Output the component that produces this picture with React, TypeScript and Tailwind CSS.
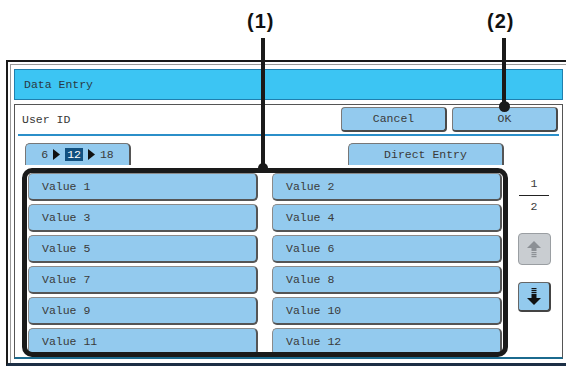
import React from "react";

const mono = { fontFamily: '"Liberation Mono", "DejaVu Sans Mono", monospace' };

function UpArrow() {
  return (
    <svg width="14" height="17" viewBox="0 0 14 17">
      <polygon points="7,0 14,7 0,7" fill="#8c9095" />
      <rect x="4.5" y="7" width="5" height="3" fill="#8c9095" />
      <rect x="4.5" y="11" width="5" height="1.2" fill="#8c9095" />
      <rect x="4.5" y="13" width="5" height="1.2" fill="#8c9095" />
      <rect x="4.5" y="15" width="5" height="1.2" fill="#8c9095" />
    </svg>
  );
}

function DownArrow() {
  return (
    <svg width="14" height="17" viewBox="0 0 14 17">
      <rect x="4.5" y="0" width="5" height="1.2" fill="#111" />
      <rect x="4.5" y="2" width="5" height="1.2" fill="#111" />
      <rect x="4.5" y="4" width="5" height="1.2" fill="#111" />
      <rect x="4.5" y="6" width="5" height="4" fill="#111" />
      <polygon points="0,10 14,10 7,17" fill="#111" />
    </svg>
  );
}

function Tri() {
  return (
    <svg width="7" height="11" viewBox="0 0 7 11" className="mx-[5px]">
      <polygon points="0,0 7,5.5 0,11" fill="#111" />
    </svg>
  );
}

function ValueBtn({ label }: { label: string }) {
  return (
    <div className="h-[28px] w-[230px] rounded-[5px] border border-[#8a8a8a] border-r-2 border-b-2 border-r-[#555] border-b-[#555] bg-[#93caee] flex items-center pl-[13px] text-[11.5px] text-[#3a3a3a]">
      {label}
    </div>
  );
}

export default function App() {
  const values = Array.from({ length: 12 }, (_, i) => `Value ${i + 1}`);
  return (
    <div className="relative w-[566px] h-[367px] bg-white overflow-hidden" style={mono}>
      {/* Dialog frame */}
      <div className="absolute left-[6px] top-[60px] w-[560px] h-[306px] border-t-2 border-l-2 border-b-[3px] border-t-[#1a1a1a] border-l-[#1a1a1a] border-b-[#1c2f45] pl-[2px] pt-[2px]">
        <div className="h-full border-t border-l border-[#9a9a9a] pl-[3px] pt-[4px]">
          {/* Title bar */}
          <div className="w-[549px] h-[31px] bg-[#3cc5f3] border border-[#1f7fae] flex items-center pl-[9px] text-[11.5px] text-[#2a3a44]">
            Data Entry
          </div>
          {/* Panel */}
          <div className="mt-[4px] w-[549px] h-[255px] border border-[#555] border-b-2 border-b-[#1b6a8e] bg-white overflow-hidden">
            <div className="h-[29px] flex items-center pr-[4px]">
              <span className="pl-[7px] text-[11.5px] text-[#3a3a3a]">User ID</span>
              <div className="ml-auto flex gap-[5px]">
                <div className="w-[106px] h-[25px] rounded-[4px] border border-[#7a7a7a] border-r-2 border-b-2 border-r-[#4a4a4a] border-b-[#4a4a4a] bg-[#93caee] flex items-center justify-center text-[11.5px] text-[#3a3a3a]">
                  Cancel
                </div>
                <div className="w-[106px] h-[25px] rounded-[4px] border border-[#7a7a7a] border-r-2 border-b-2 border-r-[#4a4a4a] border-b-[#4a4a4a] bg-[#93caee] flex items-center justify-center text-[11.5px] text-[#3a3a3a]">
                  OK
                </div>
              </div>
            </div>
            <div className="mx-[3px] h-[2px] bg-[#2b8fc9]" />
            {/* Tabs */}
            <div className="mt-[7px] flex h-[22px]">
              <div className="ml-[10px] w-[106px] h-[22px] rounded-t-[5px] border-t border-l border-r-2 border-[#777] border-r-[#555] bg-[#93caee] flex items-center justify-center text-[11.5px] text-[#3a3a3a]">
                <span>6</span>
                <Tri />
                <span className="bg-[#12507f] text-white px-[2px] leading-[13px]">12</span>
                <Tri />
                <span>18</span>
              </div>
              <div className="ml-[217px] w-[156px] h-[22px] rounded-t-[5px] border-t border-l border-r-2 border-[#777] border-r-[#555] bg-[#93caee] flex items-center justify-center text-[11.5px] text-[#3a3a3a]">
                Direct Entry
              </div>
            </div>
            {/* List */}
            <div className="flex pt-[8px]">
              <div className="ml-[13px] grid grid-cols-[230px_230px] gap-x-[14px] gap-y-[3px]">
                {values.map((v) => (
                  <ValueBtn key={v} label={v} />
                ))}
              </div>
              <div className="ml-[15px] w-[34px] flex flex-col items-center">
                <div className="mt-[4px] text-[11.5px] leading-[14px] text-[#3a3a3a]">1</div>
                <div className="mt-[4px] w-[30px] h-px bg-[#222]" />
                <div className="mt-[4px] text-[11.5px] leading-[14px] text-[#3a3a3a]">2</div>
                <div className="mt-[19px] w-[33px] h-[32px] rounded-[4px] border border-[#9a9ea2] bg-[#c9cdd1] flex items-center justify-center">
                  <UpArrow />
                </div>
                <div className="mt-[17px] w-[33px] h-[30px] rounded-[4px] border border-[#666] border-r-2 border-b-2 border-r-[#444] border-b-[#444] bg-[#93caee] flex items-center justify-center">
                  <DownArrow />
                </div>
              </div>
            </div>
          </div>
        </div>
      </div>

      {/* Annotation (1) */}
      <div
        className="absolute left-[247px] top-[11px] text-[20px] font-bold tracking-[1px] text-[#111] leading-none"
        style={{ fontFamily: '"Liberation Sans", Arial, sans-serif' }}
      >
        (1)
      </div>
      <div className="absolute left-[261px] top-[38px] w-[4px] h-[132px] bg-[#1a1a1a]" />
      <div className="absolute left-[258px] top-[163px] w-[10px] h-[10px] rounded-full bg-[#1a1a1a]" />
      <div className="absolute left-[22px] top-[168px] w-[486px] h-[189px] border-[5px] border-[#1a1a1a] rounded-[10px]" />

      {/* Annotation (2) */}
      <div
        className="absolute left-[487px] top-[11px] text-[20px] font-bold tracking-[1px] text-[#111] leading-none"
        style={{ fontFamily: '"Liberation Sans", Arial, sans-serif' }}
      >
        (2)
      </div>
      <div className="absolute left-[502px] top-[38px] w-[4px] h-[68px] bg-[#1a1a1a]" />
      <div className="absolute left-[499px] top-[101px] w-[11px] h-[11px] rounded-full bg-[#1a1a1a]" />
    </div>
  );
}
